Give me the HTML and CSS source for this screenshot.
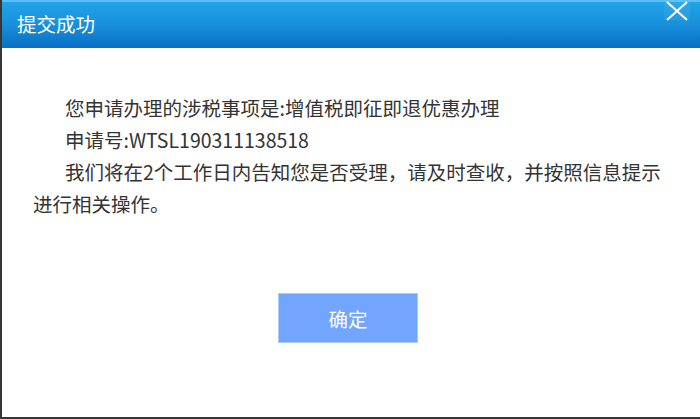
FILE: index.html
```html
<!DOCTYPE html>
<html lang="zh-CN">
<head>
<meta charset="utf-8">
<title>提交成功</title>
<link rel="stylesheet" href="styles.css">
</head>
<body>
<div class="page">
  <div class="dialog">
    <div class="header">
      <span class="title">提交成功</span>
      <span class="close" aria-label="关闭">
        <svg width="26" height="22" viewBox="0 0 26 22">
          <path d="M3 2 L23 20 M23 2 L3 20" stroke="#ffffff" stroke-width="2" fill="none"/>
        </svg>
      </span>
    </div>
    <div class="content">
      <p class="line indent">您申请办理的涉税事项是:增值税即征即退优惠办理</p>
      <p class="line indent">申请号:WTSL190311138518</p>
      <p class="line indent">我们将在2个工作日内告知您是否受理，请及时查收，并按照信息提示<br>进行相关操作。</p>
    </div>
    <div class="actions">
      <button class="btn">确定</button>
    </div>
  </div>
</div>
</body>
</html>
```

FILE: styles.css
```css
html, body {
  margin: 0;
  padding: 0;
  background: #363636;
}
.page {
  width: 700px;
  height: 419px;
  box-sizing: border-box;
  padding: 0 0 2px 2px;
}
.dialog {
  height: 100%;
  background: #ffffff;
  display: flex;
  flex-direction: column;
  font-family: "Noto Sans CJK SC", "Noto Sans", sans-serif;
}
.header {
  height: 48px;
  box-sizing: border-box;
  border-top: 2px solid #5bbdf0;
  background: linear-gradient(to bottom, #22a3e8 0%, #1890dc 50%, #086ec3 100%);
  display: flex;
  justify-content: space-between;
  align-items: flex-start;
  padding: 0 10px 0 15px;
}
.title {
  color: #ffffff;
  font-size: 19.5px;
  line-height: 46px;
  margin-top: -1px;
}
.close {
  display: block;
  width: 26px;
  height: 20px;
  margin-top: -2px;
  background: rgba(255, 255, 255, 0.06);
}
.close svg {
  display: block;
}
.content {
  padding: 44px 20px 0 31px;
}
.line {
  margin: 0;
  font-size: 19.5px;
  line-height: 32px;
  color: #333333;
  white-space: nowrap;
}
.indent {
  text-indent: 32px;
}
.actions {
  display: flex;
  justify-content: center;
  padding-right: 6px;
  margin-top: 73px;
}
.btn {
  width: 140px;
  height: 50px;
  border: 1px solid #a8c8ff;
  background: #72a6fe;
  color: #ffffff;
  font-family: "Noto Sans CJK SC", sans-serif;
  font-size: 19.5px;
  padding: 0;
  cursor: pointer;
}
```
